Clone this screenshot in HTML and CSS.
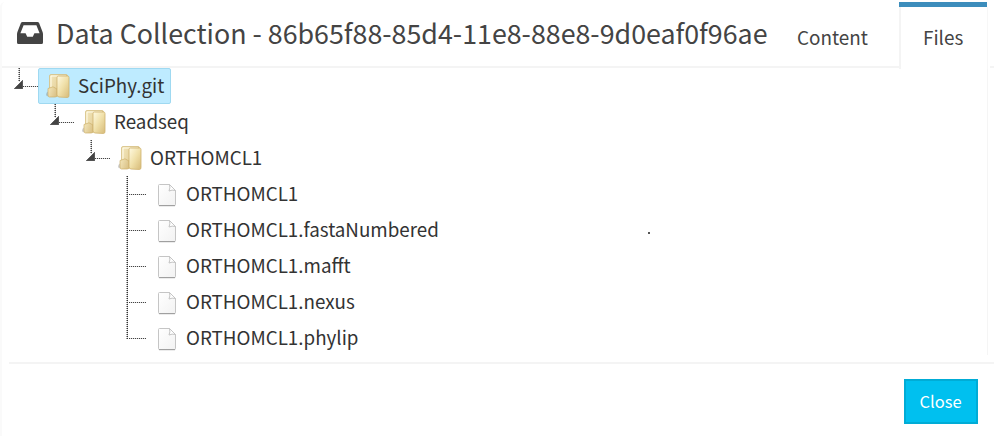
FILE: index.html
```
<!DOCTYPE html>
<html lang="en">
<head>
<meta charset="utf-8">
<title>Data Collection</title>
<link rel="stylesheet" href="styles.css">
</head>
<body>
<svg class="defs" width="0" height="0" aria-hidden="true">
  <defs>
    <linearGradient id="back" x1="0" x2="1" y1="0" y2=".4"><stop offset="0" stop-color="#f4e8bd"/><stop offset="1" stop-color="#dcc48a"/></linearGradient>
    <linearGradient id="front" x1="0" x2="1" y1="0" y2="1"><stop offset="0" stop-color="#fffae2"/><stop offset=".5" stop-color="#f0e0a9"/><stop offset="1" stop-color="#d6ba78"/></linearGradient>
    <linearGradient id="paper" x1="0" x2="1" y1="0" y2="1"><stop offset="0" stop-color="#fff"/><stop offset="1" stop-color="#f2f2f2"/></linearGradient>
    <symbol id="folder" viewBox="0 0 24 26">
      <path d="M0 22Q0 19 3 18V23Q1 24 0 22Z" fill="#777" opacity=".35"/>
      <rect x="3.500" y="1.500" width="18" height="21.500" rx="1.500" fill="url(#back)" stroke="#d6bf82" stroke-width=".8"/>
      <path d="M5 3H20M5 3V17" stroke="#fffbe9" fill="none"/>
      <path d="M2 15.500L7 13.800L11 16V22.500Q11 24 9 24H3.500Q2 24 2 22Z" fill="url(#back)" stroke="#cdb06a" stroke-width=".7"/>
      <path d="M11 4.500Q11 3 12.500 3H21.500Q23 3 23 4.500V22.500Q23 24.500 21.500 24.500L13 24Q11 23.500 11 22V16Z" fill="url(#front)" stroke="#cfb26e" stroke-width=".8"/>
    </symbol>
    <symbol id="file" viewBox="0 0 20 24">
      <path d="M1.500 2.500Q1.500 1.500 2.500 1.500H12.500L18.500 7.500V21.500Q18.500 22.500 17.500 22.500H2.500Q1.500 22.500 1.500 21.500Z" fill="url(#paper)" stroke="#c5c5c5"/>
      <path d="M12.500 1.500Q13.500 5 12 8Q15 6.500 18.500 7.500Z" fill="#fff" stroke="#c4c4c4"/>
      <path d="M2 22.700H18" stroke="#989898"/>
    </symbol>
    <symbol id="toggle" viewBox="0 0 9 9"><path d="M.3 8.700L8.700 .3V8.700Z" fill="#444" stroke="#333" stroke-width=".6"/></symbol>
  </defs>
</svg>
<main class="panel">
  <header class="header">
    <svg class="inbox" viewBox="0 0 26 22"><path fill="#444" fill-rule="evenodd" d="M5.600 0H20.400Q21.600 0 22.100 1.100L25.500 9.800Q26 11 26 12.300V20.500Q26 22 24.500 22H1.500Q0 22 0 20.500V12.300Q0 11 .5 9.800L3.900 1.100Q4.400 0 5.600 0ZM6.600 3.200L3.400 11.200H8.600L10.200 14.700H15.800L17.400 11.200H22.600L19.400 3.200Z"/></svg>
    <h1 class="title">Data Collection - 86b65f88-85d4-11e8-88e8-9d0eaf0f96ae</h1>
    <nav class="tabs">
      <span class="tab">Content</span>
      <span class="tab tab-active">Files</span>
    </nav>
  </header>
  <section class="body">
    <div class="tree">
      <div class="row level-0"><span class="branch"><svg class="toggle"><use href="#toggle"/></svg></span><span class="node selected"><svg class="folder"><use href="#folder"/></svg><span class="label">SciPhy.git</span></span></div>
      <div class="row level-1"><span class="branch"><svg class="toggle"><use href="#toggle"/></svg></span><span class="node"><svg class="folder"><use href="#folder"/></svg><span class="label">Readseq</span></span></div>
      <div class="row level-2"><span class="branch"><svg class="toggle"><use href="#toggle"/></svg></span><span class="node"><svg class="folder"><use href="#folder"/></svg><span class="label">ORTHOMCL1</span></span></div>
      <div class="row level-3"><span class="branch line"></span><span class="node"><svg class="file"><use href="#file"/></svg><span class="label">ORTHOMCL1</span></span></div>
      <div class="row level-3"><span class="branch line"></span><span class="node"><svg class="file"><use href="#file"/></svg><span class="label">ORTHOMCL1.fastaNumbered</span></span></div>
      <div class="row level-3"><span class="branch line"></span><span class="node"><svg class="file"><use href="#file"/></svg><span class="label">ORTHOMCL1.mafft</span></span></div>
      <div class="row level-3"><span class="branch line"></span><span class="node"><svg class="file"><use href="#file"/></svg><span class="label">ORTHOMCL1.nexus</span></span></div>
      <div class="row level-3"><span class="branch line last"></span><span class="node"><svg class="file"><use href="#file"/></svg><span class="label">ORTHOMCL1.phylip</span></span></div>
    </div>
    <i class="speck"></i>
  </section>
  <footer class="footer"><button class="close">Close</button></footer>
</main>
</body>
</html>
```

FILE: styles.css
```
* { box-sizing: border-box; }
body { margin: 0; background: #fff; color: #333; font-family: "Noto Sans CJK JP", "Open Sans", sans-serif; overflow: hidden; }
.defs { position: absolute; }
.panel { height: 434px; margin-top: 2px; border-left: 2px solid #fafafa; border-top-left-radius: 5px; }
.header { display: flex; height: 66px; background: linear-gradient(#f4f4f4, #f4f4f4) 0 64px / 897px 2px no-repeat, linear-gradient(#f4f4f4, #f4f4f4) 988px 64px / 6px 2px no-repeat; }
.inbox { width: 26px; height: 22px; margin: 20px 0 0 15px; flex: none; }
.title { margin: 0 0 0 13px; width: 741px; flex: none; font-weight: 400; font-size: 26.800px; line-height: 62px; color: #444; white-space: nowrap; }
.tabs { display: flex; flex: none; color: #444; font-size: 18.900px; }
.tab { width: 102px; line-height: 70px; white-space: nowrap; }
.tab-active { width: 88px; height: 67px; padding: 5px 0 0 24px; line-height: 60px; background: linear-gradient(#3c8dbc, #3c8dbc) 0 0 / 88px 5px no-repeat, linear-gradient(#f4f4f4, #f4f4f4) 0 5px / 2px 62px no-repeat; box-shadow: 1px 5px 0 #f7f7f7; clip-path: inset(0 -1px 0 0); }
.body { display: flex; width: 986px; height: 287px; border-right: 1px solid #f5f5f5; }
.tree { width: 646px; }
.row { display: flex; height: 36px; }
.level-0 { padding-left: 12px; }
.level-1 { padding-left: 48px; }
.level-2 { padding-left: 84px; }
.level-3 { padding-left: 120px; }
.branch { width: 24px; padding: 12px 0 0; flex: none; background:
  repeating-linear-gradient(to bottom, #444 0 1px, #ddd 1px 2px) 5px 0 / 1px 14px no-repeat,
  repeating-linear-gradient(to bottom, #999 0 1px, transparent 1px 2px) 4px 0 / 1px 14px no-repeat,
  repeating-linear-gradient(to right, #444 0 1px, #ddd 1px 2px) 9px 18px / 15px 1px no-repeat; }
.toggle { display: block; width: 9px; height: 9px; }
.line { background:
  repeating-linear-gradient(to bottom, #333 0 1px, #ddd 1px 2px) 5px 0 / 1px 36px no-repeat,
  repeating-linear-gradient(to bottom, #999 0 1px, transparent 1px 2px) 4px 0 / 1px 36px no-repeat,
  repeating-linear-gradient(to right, #444 0 1px, #ddd 1px 2px) 7px 18px / 17px 1px no-repeat; }
.last { background-size: 1px 19px, 1px 19px, 17px 1px; }
.node { display: flex; height: 36px; padding-left: 7px; border: 1px solid transparent; border-radius: 2px; }
.selected { width: 133px; background: #beebff; border-color: #9fd9f1; }
.folder { width: 24px; height: 26px; margin: 4px 8px 0 0; }
.file { width: 20px; height: 24px; margin: 6px 9px 0 3px; }
.label { font-size: 18.800px; line-height: 32px; white-space: nowrap; }
.speck { width: 2px; height: 2px; margin-top: 164px; background: #555; }
.footer { display: flex; height: 81px; margin-left: 7px; padding-right: 16px; justify-content: flex-end; border-top: 2px solid #f4f4f4; margin-top: 7px; }
.close { width: 74px; height: 45px; margin-top: 15px; padding: 0 1px 0 0; font: 16.500px/39px "Noto Sans CJK JP", sans-serif; color: #fff; background: #00c0ef; border: 2px solid #00acd6; }
```
